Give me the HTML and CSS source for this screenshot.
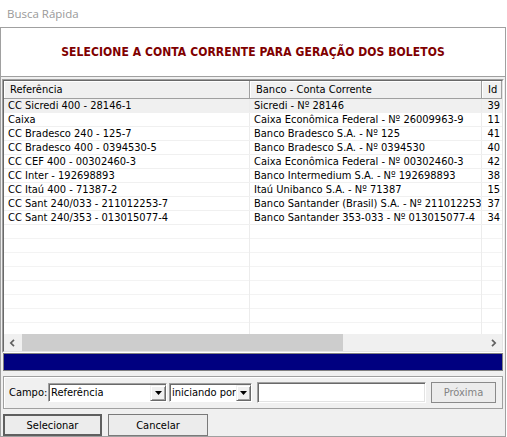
FILE: index.html
```html
<!DOCTYPE html>
<html lang="pt">
<head>
<meta charset="utf-8">
<title>Busca Rápida</title>
<link rel="stylesheet" href="styles.css">
</head>
<body>
<div class="window">
  <div class="titlebar">Busca Rápida</div>
  <div class="client">
    <div class="banner">SELECIONE A CONTA CORRENTE PARA GERAÇÃO DOS BOLETOS</div>
    <div class="grid">
      <div class="grid-inner">
        <div class="grid-head">
          <div class="hc c1">Referência</div>
          <div class="hc c2">Banco - Conta Corrente</div>
          <div class="hc c3">Id</div>
        </div>
        <div class="grid-body">
          <div class="row sel"><div class="cell c1">CC Sicredi 400 - 28146-1</div><div class="cell c2">Sicredi - Nº 28146</div><div class="cell c3">39</div></div>
          <div class="row"><div class="cell c1">Caixa</div><div class="cell c2">Caixa Econômica Federal - Nº 26009963-9</div><div class="cell c3">11</div></div>
          <div class="row"><div class="cell c1">CC Bradesco 240 - 125-7</div><div class="cell c2">Banco Bradesco S.A. - Nº 125</div><div class="cell c3">41</div></div>
          <div class="row"><div class="cell c1">CC Bradesco 400 - 0394530-5</div><div class="cell c2">Banco Bradesco S.A. - Nº 0394530</div><div class="cell c3">40</div></div>
          <div class="row"><div class="cell c1">CC CEF 400 - 00302460-3</div><div class="cell c2">Caixa Econômica Federal - Nº 00302460-3</div><div class="cell c3">42</div></div>
          <div class="row"><div class="cell c1">CC Inter - 192698893</div><div class="cell c2">Banco Intermedium S.A. - Nº 192698893</div><div class="cell c3">38</div></div>
          <div class="row"><div class="cell c1">CC Itaú 400 - 71387-2</div><div class="cell c2">Itaú Unibanco S.A. - Nº 71387</div><div class="cell c3">15</div></div>
          <div class="row"><div class="cell c1">CC Sant 240/033 - 211012253-7</div><div class="cell c2">Banco Santander (Brasil) S.A. - Nº 211012253</div><div class="cell c3">37</div></div>
          <div class="row"><div class="cell c1">CC Sant 240/353 - 013015077-4</div><div class="cell c2">Banco Santander 353-033 - Nº 013015077-4</div><div class="cell c3">34</div></div>
          <div class="filler"><div class="cell c1"></div><div class="cell c2"></div><div class="cell c3"></div></div>
        </div>
        <div class="hscroll">
          <div class="sb-btn"><svg width="7" height="8" viewBox="0 0 7 8"><polyline points="5,0.8 1.8,4 5,7.2" fill="none" stroke="#606060" stroke-width="1.7"/></svg></div>
          <div class="sb-track"><div class="sb-thumb"></div></div>
          <div class="sb-btn"><svg width="7" height="8" viewBox="0 0 7 8"><polyline points="2,0.8 5.2,4 2,7.2" fill="none" stroke="#606060" stroke-width="1.7"/></svg></div>
        </div>
      </div>
    </div>
    <div class="progress"></div>
    <div class="search">
      <span class="label">Campo:</span>
      <div class="combo combo-field"><span class="combo-text">Referência</span><span class="dd-btn"><svg width="7" height="4" viewBox="0 0 7 4"><polygon points="0,0 7,0 3.5,4" fill="#000"/></svg></span></div>
      <div class="combo combo-mode"><span class="combo-text">iniciando por</span><span class="dd-btn"><svg width="7" height="4" viewBox="0 0 7 4"><polygon points="0,0 7,0 3.5,4" fill="#000"/></svg></span></div>
      <div class="textbox"></div>
      <div class="btn btn-disabled">Próxima</div>
    </div>
    <div class="actions">
      <div class="btn btn-default">Selecionar</div>
      <div class="btn btn-cancel">Cancelar</div>
    </div>
  </div>
</div>
</body>
</html>
```
FILE: styles.css
```css
* { box-sizing: border-box; }
html, body { margin: 0; padding: 0; background: #fff; }
body {
  width: 507px;
  height: 437px;
  overflow: hidden;
  font-family: "DejaVu Sans Condensed", "Liberation Sans", sans-serif;
  font-size: 11px;
  color: #000;
}
.window { width: 506px; }
.titlebar {
  height: 27px;
  display: flex;
  align-items: center;
  padding-left: 7px;
  font-family: "Open Sans", "Liberation Sans", sans-serif;
  font-size: 11.5px;
  color: #999;
  background: #fff;
}
.client {
  height: 410px;
  background: #f0f0f0;
  border: 1px solid #a0a0a0;
  border-top: none;
  display: flex;
  flex-direction: column;
}
.banner {
  height: 50px;
  flex: none;
  background: #fff;
  border-top: 1px solid #a0a0a0;
  border-bottom: 1px solid #a0a0a0;
  display: flex;
  align-items: center;
  justify-content: center;
  font-weight: bold;
  font-size: 12px;
  letter-spacing: 0.08px;
  color: #800000;
  margin-bottom: 2px;
}
.grid {
  flex: none;
  height: 274px;
  margin: 0 1px;
  border: 1px solid;
  border-color: #a0a0a0 #fff #fff #a0a0a0;
}
.grid-inner {
  height: 100%;
  border: 1px solid;
  border-color: #696969 #e3e3e3 #e3e3e3 #696969;
  background: #fff;
  display: flex;
  flex-direction: column;
  overflow: hidden;
}
.grid-head { display: flex; height: 18px; flex: none; }
.hc {
  height: 18px;
  line-height: 17px;
  padding-left: 6px;
  background: #f0f0f0;
  border-right: 1px solid #a0a0a0;
  border-bottom: 1px solid #a0a0a0;
  box-shadow: inset 1px 1px 0 #fff;
  white-space: nowrap;
  overflow: hidden;
}
.c1 { width: 246px; flex: none; }
.c2 { width: 232px; flex: none; }
.c3 { flex: 1; }
.grid-body { flex: 1; display: flex; flex-direction: column; overflow: hidden; }
.row { display: flex; height: 14px; flex: none; border-bottom: 1px solid #f0f0f0; }
.row.sel { background: #f0f0f0; }
.cell {
  line-height: 13px;
  padding-left: 4px;
  border-right: 1px solid #ececec;
  white-space: nowrap;
  overflow: hidden;
}
.cell.c3 { text-align: right; padding-left: 0; padding-right: 2px; border-right: none; }
.filler {
  flex: 1;
  display: flex;
  background: repeating-linear-gradient(to bottom, transparent 0, transparent 13px, #f3f3f3 13px, #f3f3f3 14px);
}
.hscroll { height: 17px; flex: none; display: flex; background: #f0f0f0; }
.sb-btn { width: 17px; flex: none; display: flex; align-items: center; justify-content: center; }
.sb-track { flex: 1; display: flex; }
.sb-thumb { width: 321px; margin-left: 1px; background: #cdcdcd; }
.progress {
  flex: none;
  height: 18px;
  margin: 0 2px;
  border: 1px solid #808080;
  background: #000080;
}
.search {
  flex: none;
  height: 33px;
  margin: 5px 2px 0;
  border: 1px solid #a0a0a0;
  box-shadow: inset 1px 1px 0 #fff;
  display: flex;
  align-items: center;
  padding-left: 5px;
}
.label { width: 39px; flex: none; }
.combo {
  flex: none;
  height: 19px;
  background: #fff;
  border: 1px solid;
  border-color: #a0a0a0 #fff #fff #a0a0a0;
  box-shadow: inset 1px 1px 0 #696969;
  padding: 1px 0 0 1px;
  display: flex;
}
.combo-field { width: 119px; margin-right: 2px; }
.combo-mode { width: 83px; margin-right: 5px; }
.combo-text { flex: 1; line-height: 16px; padding-left: 1px; white-space: nowrap; overflow: hidden; }
.dd-btn {
  width: 16px;
  flex: none;
  height: 16px;
  background: #f0f0f0;
  border: 1px solid;
  border-color: #f0f0f0 #696969 #696969 #f0f0f0;
  box-shadow: inset 1px 1px 0 #fff, inset -1px -1px 0 #a0a0a0;
  display: flex;
  align-items: center;
  justify-content: center;
}
.combo-mode .dd-btn { width: 15px; }
.textbox {
  flex: none;
  width: 169px;
  height: 21px;
  margin-right: 5px;
  background: #fff;
  border: 1px solid;
  border-color: #a0a0a0 #fff #fff #a0a0a0;
  box-shadow: inset 1px 1px 0 #696969, inset -1px -1px 0 #e3e3e3;
}
.btn {
  flex: none;
  display: flex;
  align-items: center;
  justify-content: center;
  background: #ececec;
}
.btn-disabled {
  width: 65px;
  height: 21px;
  border: 1px solid #8a8a8a;
  color: #838383;
}
.actions {
  flex: none;
  height: 22px;
  margin: 5px 0 0 2px;
  display: flex;
  gap: 6px;
}
.btn-default { width: 99px; height: 22px; border: 2px solid #5f5f5f; }
.btn-cancel { width: 100px; height: 22px; border: 1px solid #7a7a7a; }
```
